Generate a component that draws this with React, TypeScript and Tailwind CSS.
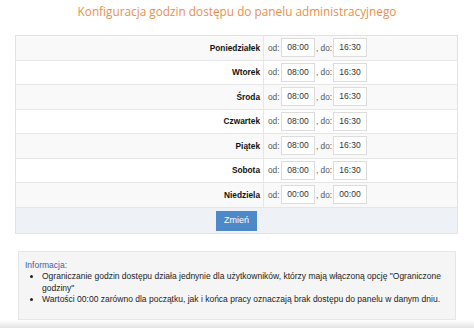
import React from 'react';

const days = [
  { name: 'Poniedziałek', from: '08:00', to: '16:30' },
  { name: 'Wtorek', from: '08:00', to: '16:30' },
  { name: 'Środa', from: '08:00', to: '16:30' },
  { name: 'Czwartek', from: '08:00', to: '16:30' },
  { name: 'Piątek', from: '08:00', to: '16:30' },
  { name: 'Sobota', from: '08:00', to: '16:30' },
  { name: 'Niedziela', from: '00:00', to: '00:00' },
];

const TimeBox = ({ value }: { value: string }) => (
  <span className="inline-flex items-center justify-center w-[34px] h-[19px] bg-white border border-[#dcdcdc] text-[8.5px] text-[#333]">
    {value}
  </span>
);

export default function App() {
  return (
    <div
      className="w-[474px] h-[328px] bg-white overflow-hidden relative"
      style={{ fontFamily: '"Liberation Sans", Arial, sans-serif' }}
    >
      <h1
        className="pt-[3px] h-[35px] text-center text-[11.8px] text-[#e8904c]"
        style={{ fontFamily: '"Open Sans", sans-serif' }}
      >
        Konfiguracja godzin dostępu do panelu administracyjnego
      </h1>

      <table className="ml-[15px] w-[443px] border-collapse border border-[#e2e2e2]">
        <tbody>
          {days.map((d, i) => (
            <tr
              key={d.name}
              className={`h-[24.5px] border-b border-[#e6e6e6] ${i % 2 === 0 ? 'bg-[#f9f9f9]' : 'bg-white'}`}
            >
              <td className="w-[248px] pr-[3px] text-right text-[8.3px] font-bold text-[#111] border-r border-[#e6e6e6]">
                {d.name}
              </td>
              <td className="pl-[4px] text-[8.3px] text-[#555]">
                <div className="flex items-center">
                  <span className="w-[13px]">od:</span>
                  <TimeBox value={d.from} />
                  <span className="w-[18px] pl-[1px]">, do:</span>
                  <TimeBox value={d.to} />
                </div>
              </td>
            </tr>
          ))}
          <tr className="h-[26.5px] bg-[#eef2f6]">
            <td colSpan={2} className="text-center">
              <button className="inline-flex items-center justify-center w-[41px] h-[20px] bg-[#4d89c9] text-white text-[9px] align-middle">
                Zmień
              </button>
            </td>
          </tr>
        </tbody>
      </table>

      <div className="mx-[18px] mt-[17px] h-[69px] bg-[#f5f5f5] border border-[#e6e6e6] pl-[6px] pt-[8px] text-[8.5px] text-[#222]">
        <div className="text-[#3d5fa5] leading-[11px]">Informacja:</div>
        <ul className="list-disc pl-[17px] leading-[11.5px]">
          <li>
            Ograniczanie godzin dostępu działa jednynie dla użytkowników, którzy mają włączoną opcję "Ograniczone godziny"
          </li>
          <li>Wartości 00:00 zarówno dla początku, jak i końca pracy oznaczają brak dostępu do panelu w danym dniu.</li>
        </ul>
      </div>

      <div className="absolute left-0 right-0 bottom-0 h-[8px] bg-gradient-to-b from-white to-[#e4e4e4]" />
    </div>
  );
}
